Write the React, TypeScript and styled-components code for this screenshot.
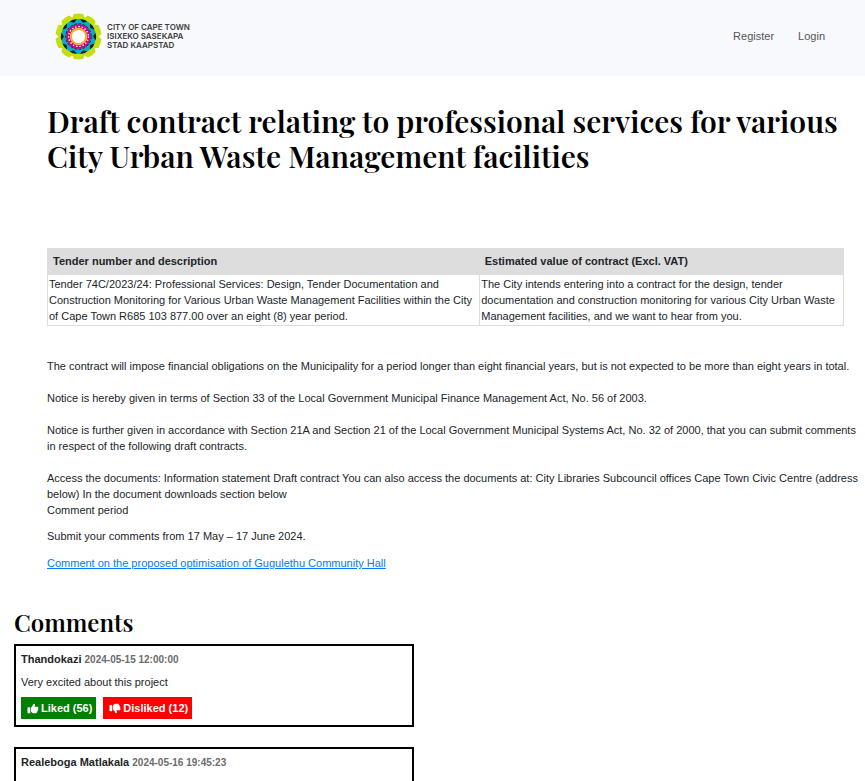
import React from "react";
import styled, { createGlobalStyle } from "styled-components";
import { FaThumbsUp, FaThumbsDown } from "react-icons/fa6";

const GlobalStyle = createGlobalStyle`
  *, *::before, *::after { box-sizing: border-box; }
  body {
    margin: 0;
    background: #fff;
    color: #212529;
    font-family: "Liberation Sans", Arial, sans-serif;
    font-size: 11px;
    line-height: 16px;
  }
`;

const Page = styled.div`
  height: 100vh;
  overflow: hidden;
`;

const Header = styled.header`
  display: flex;
  align-items: center;
  justify-content: space-between;
  height: 76px;
  padding: 0 40px 4px 55px;
  background: #f8f9fc;
`;

const Brand = styled.a`
  display: flex;
  align-items: center;
  gap: 5px;
  color: #3c3c3e;
  text-decoration: none;
`;

const BrandName = styled.span`
  display: grid;
  font-family: Inter, sans-serif;
  font-size: 8px;
  font-weight: 600;
  line-height: 9px;
  text-transform: uppercase;
  white-space: nowrap;
`;

const BrandLine = styled.span`
  display: block;
`;

const Nav = styled.nav`
  display: flex;
  gap: 24px;
`;

const NavLink = styled.a`
  color: #555;
  text-decoration: none;
`;

const Article = styled.main`
  padding: 28px 4px 0 47px;
`;

const Title = styled.h1`
  margin: 0 6px 0 0;
  color: #000;
  font-family: "Playfair Display", "Liberation Serif", serif;
  font-size: 30px;
  font-weight: 600;
  line-height: 35px;
`;

const TableFrame = styled.div`
  padding: 74px 17px 32px 0;
`;

const TenderTable = styled.table`
  width: 100%;
  border-collapse: collapse;
  border: 1px solid #ddd;
`;

const HeadCell = styled.th<{ $width?: string }>`
  width: ${(p) => p.$width ?? "auto"};
  padding: 4px 5px 5px;
  background: #ddd;
  text-align: left;
`;

const Cell = styled.td`
  padding: 1px;
  border: 1px solid #ddd;
  vertical-align: top;
`;

const Paragraph = styled.p<{ $gap: number }>`
  margin: 0 0 ${(p) => p.$gap}px;
`;

const TextLink = styled.a`
  color: #007bff;
  text-decoration: underline;
`;

const Comments = styled.section`
  padding: 36px 14px 0;
`;

const SectionTitle = styled.h2`
  margin: 0 0 7px;
  color: #000;
  font-family: "Playfair Display", "Liberation Serif", serif;
  font-size: 24px;
  font-weight: 600;
  line-height: 30px;
`;

const Card = styled.article`
  max-width: 400px;
  min-height: 83px;
  margin-bottom: 20px;
  padding: 5px;
  border: 2px solid #000;
`;

const Author = styled.h3`
  margin: 0 0 6px;
  font-size: 11px;
  line-height: 16px;
`;

const Time = styled.time`
  color: #6c6c6c;
  font-size: 10px;
`;

const Actions = styled.div`
  display: flex;
  gap: 7px;
`;

const VoteButton = styled.button<{ $tone: string }>`
  display: flex;
  align-items: center;
  gap: 2px;
  height: 22px;
  padding: 0 4px 0 6px;
  border: 0;
  background: ${(p) => p.$tone};
  color: #fff;
  font: inherit;
  font-weight: 700;
  svg { width: 12px; height: 11px; }
`;

const around = (n: number, offset = 0) =>
  Array.from({ length: n }, (_, i) => (360 / n) * i + offset);

function CityMark() {
  return (
    <svg width="47" height="47" viewBox="-50 -50 100 100" aria-hidden="true">
      <circle r="42" fill="#c4df0b" />
      {around(10).map((a) => (
        <path key={a} d="M-14-38 L-10-48 L0-49 L10-48 L14-38Z" fill="#c4df0b" transform={`rotate(${a})`} />
      ))}
      <circle r="37" fill="#08acc8" />
      {around(10, 18).map((a) => (
        <path key={a} d="M-8-36 Q0-39 8-36 L0-31Z" fill="#10181c" transform={`rotate(${a})`} />
      ))}
      <circle r="27" fill="none" stroke="#10181c" strokeWidth="2" strokeDasharray="6 3" />
      <circle r="26" fill="#d3007f" />
      <circle r="21" fill="none" stroke="#fff" strokeWidth="3" strokeDasharray="3 4" />
      <circle r="18" fill="#fff" />
      <circle r="16" fill="none" stroke="#f9ae17" strokeWidth="4" />
    </svg>
  );
}

export default function App() {
  return (
    <Page>
      <GlobalStyle />
      <Header>
        <Brand href="#">
          <CityMark />
          <BrandName>
            <BrandLine>City of Cape Town</BrandLine>
            <BrandLine>Isixeko Sasekapa</BrandLine>
            <BrandLine>Stad Kaapstad</BrandLine>
          </BrandName>
        </Brand>
        <Nav>
          <NavLink href="#register">Register</NavLink>
          <NavLink href="#login">Login</NavLink>
        </Nav>
      </Header>
      <Article>
        <Title>Draft contract relating to professional services for various City Urban Waste Management facilities</Title>
        <TableFrame>
          <TenderTable>
            <thead>
              <tr>
                <HeadCell $width="54.3%">Tender number and description</HeadCell>
                <HeadCell>Estimated value of contract (Excl. VAT)</HeadCell>
              </tr>
            </thead>
            <tbody>
              <tr>
                <Cell>
                  Tender 74C/2023/24: Professional Services: Design, Tender Documentation and Construction
                  Monitoring for Various Urban Waste Management Facilities within the City of Cape Town R685 103
                  877.00 over an eight (8) year period.
                </Cell>
                <Cell>
                  The City intends entering into a contract for the design, tender documentation and construction
                  monitoring for various City Urban Waste Management facilities, and we want to hear from you.
                </Cell>
              </tr>
            </tbody>
          </TenderTable>
        </TableFrame>
        <Paragraph $gap={16}>
          The contract will impose financial obligations on the Municipality for a period longer than eight
          financial years, but is not expected to be more than eight years in total.
        </Paragraph>
        <Paragraph $gap={16}>
          Notice is hereby given in terms of Section 33 of the Local Government Municipal Finance Management Act,
          No. 56 of 2003.
        </Paragraph>
        <Paragraph $gap={16}>
          Notice is further given in accordance with Section 21A and Section 21 of the Local Government Municipal
          Systems Act, No. 32 of 2000, that you can submit comments in respect of the following draft contracts.
        </Paragraph>
        <Paragraph $gap={0}>
          Access the documents: Information statement Draft contract You can also access the documents at: City
          Libraries Subcouncil offices Cape Town Civic Centre (address below) In the document downloads section
          below
        </Paragraph>
        <Paragraph $gap={10}>Comment period</Paragraph>
        <Paragraph $gap={11}>Submit your comments from 17 May – 17 June 2024.</Paragraph>
        <TextLink href="#comment">Comment on the proposed optimisation of Gugulethu Community Hall</TextLink>
      </Article>
      <Comments>
        <SectionTitle>Comments</SectionTitle>
        <Card>
          <Author>
            Thandokazi <Time dateTime="2024-05-15T12:00:00">2024-05-15 12:00:00</Time>
          </Author>
          <Paragraph $gap={7}>Very excited about this project</Paragraph>
          <Actions>
            <VoteButton type="button" $tone="#008000">
              <FaThumbsUp aria-hidden="true" />
              Liked (56)
            </VoteButton>
            <VoteButton type="button" $tone="#ff0000">
              <FaThumbsDown aria-hidden="true" />
              Disliked (12)
            </VoteButton>
          </Actions>
        </Card>
        <Card>
          <Author>
            Realeboga Matlakala <Time dateTime="2024-05-16T19:45:23">2024-05-16 19:45:23</Time>
          </Author>
        </Card>
      </Comments>
    </Page>
  );
}
